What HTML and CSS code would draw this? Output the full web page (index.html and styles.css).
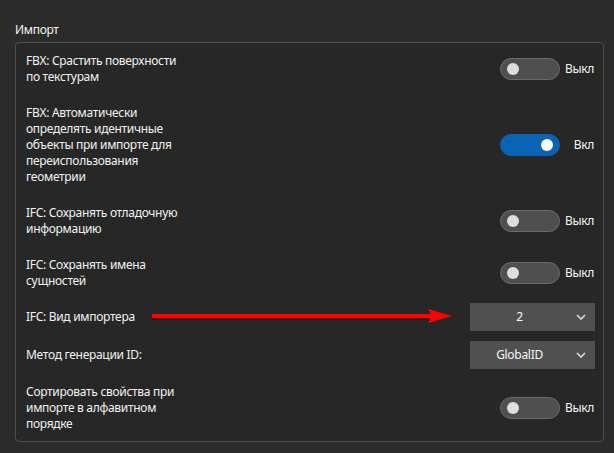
FILE: index.html
```html
<!DOCTYPE html>
<html lang="ru">
<head>
<meta charset="utf-8">
<title>Импорт</title>
<link rel="stylesheet" href="styles.css">
</head>
<body>
<div class="page">
  <div class="group-title">Импорт</div>
  <div class="panel">
    <div class="row">
      <div class="label">FBX: Срастить поверхности<br>по текстурам</div>
      <div class="control">
        <span class="toggle"><span class="knob"></span></span>
        <span class="state">Выкл</span>
      </div>
    </div>
    <div class="row">
      <div class="label">FBX: Автоматически<br>определять идентичные<br>объекты при импорте для<br>переиспользования<br>геометрии</div>
      <div class="control">
        <span class="toggle toggle--on"><span class="knob"></span></span>
        <span class="state">Вкл</span>
      </div>
    </div>
    <div class="row">
      <div class="label">IFC: Сохранять отладочную<br>информацию</div>
      <div class="control">
        <span class="toggle"><span class="knob"></span></span>
        <span class="state">Выкл</span>
      </div>
    </div>
    <div class="row row--before-select">
      <div class="label">IFC: Сохранять имена<br>сущностей</div>
      <div class="control">
        <span class="toggle"><span class="knob"></span></span>
        <span class="state">Выкл</span>
      </div>
    </div>
    <div class="row row--select">
      <div class="label">IFC: Вид импортера</div>
      <div class="select">
        <span class="select-value">2</span>
        <svg class="chevron" width="10" height="6" viewBox="0 0 10 6"><path d="M1 1 L5 5 L9 1" fill="none" stroke="#d8d8d8" stroke-width="1.6"/></svg>
      </div>
      <svg class="arrow" width="304" height="16" viewBox="0 0 304 16">
        <rect x="0" y="6" width="282" height="5" fill="#5a0000"/>
        <rect x="0" y="5" width="282" height="4" fill="#ff0000"/>
        <path d="M276 0 L300 7 L276 14 L280 7 Z" fill="#ff0000"/>
      </svg>
    </div>
    <div class="row row--select">
      <div class="label">Метод генерации ID:</div>
      <div class="select">
        <span class="select-value">GlobalID</span>
        <svg class="chevron" width="10" height="6" viewBox="0 0 10 6"><path d="M1 1 L5 5 L9 1" fill="none" stroke="#d8d8d8" stroke-width="1.6"/></svg>
      </div>
    </div>
    <div class="row row--last">
      <div class="label">Сортировать свойства при<br>импорте в алфавитном<br>порядке</div>
      <div class="control">
        <span class="toggle"><span class="knob"></span></span>
        <span class="state">Выкл</span>
      </div>
    </div>
  </div>
</div>
</body>
</html>
```
FILE: styles.css
```css
html, body {
  margin: 0;
  padding: 0;
  background: #2b2b2b;
}
body {
  font-family: "Noto Sans", "Open Sans", sans-serif;
  font-size: 12px;
  line-height: 16px;
  letter-spacing: -0.3px;
  color: #f2f2f2;
}
.page {
  padding: 22px 10px 0 15px;
}
.group-title {
  height: 16px;
  margin-bottom: 4px;
  color: #f5f5f5;
}
.panel {
  border: 1px solid #4e4e4e;
  border-radius: 4px;
  background: #272727;
  padding: 0 8px 0 10px;
}
.row {
  position: relative;
  display: flex;
  align-items: center;
  justify-content: space-between;
  padding: 10px 0;
}
.row--before-select {
  padding-bottom: 9px;
}
.row--select {
  padding: 5px 0;
}
.row--last {
  padding: 10px 0 9px;
}
.label {
  white-space: nowrap;
}
.control {
  display: flex;
  align-items: center;
}
.toggle {
  position: relative;
  box-sizing: border-box;
  width: 60px;
  height: 22px;
  border-radius: 11px;
  background: #4f4f4f;
  border: 1px solid #6a6a6a;
}
.knob {
  position: absolute;
  left: 6px;
  top: 4px;
  width: 12px;
  height: 12px;
  border-radius: 50%;
  background: #dedede;
}
.toggle--on {
  background: #0b63b4;
  border-color: #0b63b4;
}
.toggle--on .knob {
  left: auto;
  right: 6px;
  background: #ffffff;
}
.state {
  width: 34px;
  text-align: right;
  padding-right: 1px;
  color: #f5f5f5;
}
.select {
  display: flex;
  align-items: center;
  width: 125px;
  height: 28px;
  background: #505050;
}
.select-value {
  flex: 1;
  text-align: center;
  color: #f5f5f5;
}
.chevron {
  margin: 0 9px 0 7px;
}
.arrow {
  position: absolute;
  left: 126px;
  top: 11px;
}
```
